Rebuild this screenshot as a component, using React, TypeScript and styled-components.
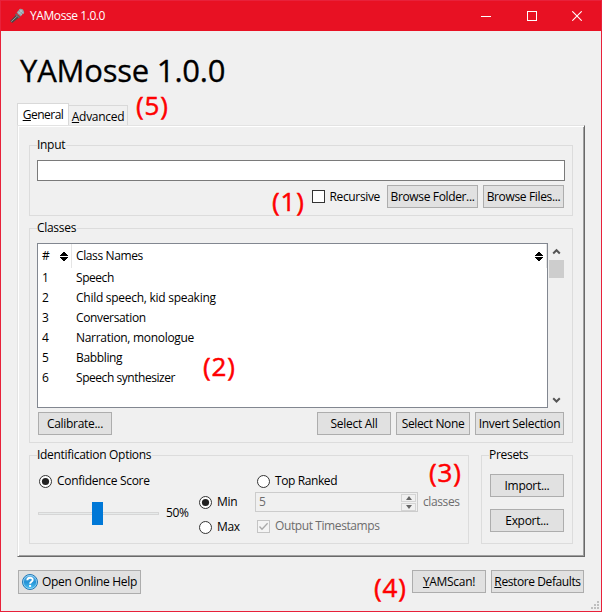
import React from "react";
import styled, { createGlobalStyle, css } from "styled-components";

const Global = createGlobalStyle`
  *, *::before, *::after { box-sizing: border-box; }
  html, body { margin: 0; padding: 0; background: #f0f0f0; }
  body { overflow: hidden; }
`;

const Window = styled.div`
  position: relative;
  width: 602px;
  height: 612px;
  display: flex;
  flex-direction: column;
  background: #f0f0f0;
  border: 1px solid #e8213a;
  color: #000;
  font-family: "Open Sans", "Noto Sans", sans-serif;
  font-size: 12px;
  line-height: 16px;
  white-space: nowrap;
  cursor: default;
`;

const Text = styled.span<{ $ls?: number }>`
  letter-spacing: ${(p) => p.$ls ?? -0.3}px;
  white-space: pre;
`;

const TitleBar = styled.header`
  flex: none;
  height: 30px;
  display: flex;
  align-items: center;
  background: #e81123;
  color: #fff;
  padding: 0 1px 0 8px;
`;

const AppName = styled.div`
  flex: 1;
  padding-left: 5px;
`;

const Caption = styled.div`
  width: 45.5px;
  height: 30px;
  display: flex;
  align-items: center;
  justify-content: center;
  svg { display: block; }
`;

const Heading = styled.h1`
  flex: none;
  margin: 0;
  height: 72px;
  padding: 18px 0 0 19px;
  font: 400 31px/42px "Open Sans", sans-serif;
  letter-spacing: -0.2px;
  -webkit-text-stroke: 0.3px #000;
`;

const Tabs = styled.nav`
  flex: none;
  display: flex;
  align-items: flex-end;
  height: 22px;
  padding-left: 16px;
`;

const Tab = styled.div<{ $active?: boolean }>`
  border: 1px solid #d9d9d9;
  border-bottom: 0;
  text-align: center;
  ${(p) =>
    p.$active
      ? css`width: 52px; height: 22px; background: #fff; padding-top: 3px;`
      : css`width: 59px; height: 20px; border-left: 0; padding-top: 3px;`}
`;

const Pane = styled.main`
  flex: none;
  width: 568px;
  height: 432px;
  margin-left: 16px;
  border-style: solid;
  border-width: 1px;
  border-color: #e3e3e3 #696969 #696969 #e3e3e3;
  box-shadow: inset 1px 1px 0 #fff, inset -1px -1px 0 #a0a0a0;
  padding: 11px 10px 0 11px;
  display: flex;
  flex-direction: column;
  gap: 4px;
`;

const Group = styled.fieldset<{ $w: number; $h: number }>`
  flex: none;
  min-width: 0;
  margin: 0;
  width: ${(p) => p.$w}px;
  height: ${(p) => p.$h}px;
  border: 1px solid #dcdcdc;
  padding: 6px 7px 0;
`;

const Legend = styled.legend`
  height: 17px;
  line-height: 16px;
  padding: 0 1px 0 0;
`;

const Entry = styled.div`
  width: 528px;
  height: 21px;
  border: 1px solid #7a7a7a;
  background: #fff;
`;

const Row = styled.div<{ $top?: number; $gap?: number; $end?: boolean; $inset?: boolean }>`
  display: flex;
  align-items: center;
  margin-top: ${(p) => p.$top ?? 0}px;
  padding: ${(p) => (p.$inset ? "0 1px" : "0")};
  gap: ${(p) => p.$gap ?? 5}px;
  justify-content: ${(p) => (p.$end ? "flex-end" : "flex-start")};
`;

const Button = styled.div<{ $w: number; $h?: number }>`
  flex: none;
  display: flex;
  align-items: center;
  justify-content: center;
  width: ${(p) => p.$w}px;
  height: ${(p) => p.$h ?? 23}px;
  border: 1px solid #adadad;
  background: #e1e1e1;
`;

const Spacer = styled.div`
  flex: 1;
`;

const Option = styled.div<{ $gap?: number; $disabled?: boolean }>`
  display: flex;
  align-items: center;
  height: 16px;
  gap: ${(p) => p.$gap ?? 5}px;
  color: ${(p) => (p.$disabled ? "#6d6d6d" : "#000")};
  svg { display: block; flex: none; }
`;

const RecursiveOption = styled(Option)`
  margin-right: 2px;
`;

const ListRow = styled.div`
  display: flex;
  width: 528px;
  height: 165px;
`;

const Tree = styled.div`
  width: 511px;
  height: 165px;
  border: 1px solid #828790;
  background: #fff;
`;

const TreeHead = styled.div`
  display: flex;
  height: 24px;
  align-items: center;
`;

const HeadCell = styled.div<{ $w: number }>`
  display: flex;
  align-items: center;
  justify-content: space-between;
  width: ${(p) => p.$w}px;
  height: 24px;
  padding: 0 3px 0 4px;
  border-right: 1px solid #e5e5e5;
`;

const TreeRow = styled.div`
  display: grid;
  grid-template-columns: 34px 1fr;
  height: 20px;
  padding-left: 4px;
  line-height: 20px;
`;

const ScrollBar = styled.div`
  width: 15px;
  height: 165px;
  margin-left: 1px;
  display: flex;
  flex-direction: column;
  align-items: center;
  svg { display: block; flex: none; }
`;

const Thumb = styled.div`
  width: 15px;
  height: 18px;
  background: #cdcdcd;
`;

const BottomGroups = styled.div`
  display: flex;
  gap: 12px;
`;

const OptionGrid = styled.div`
  display: grid;
  grid-template-columns: 160px 58px 1fr;
`;

const Column = styled.div<{ $top?: number; $left?: number }>`
  padding-top: ${(p) => p.$top ?? 0}px;
  padding-left: ${(p) => p.$left ?? 0}px;
`;

const SliderRow = styled.div`
  display: flex;
  align-items: center;
  height: 24px;
  margin-top: 12px;
  margin-left: -1px;
  gap: 7px;
`;

const Track = styled.div`
  display: flex;
  align-items: center;
  width: 121px;
  height: 3px;
  padding-left: 53px;
  border: 1px solid #d6d6d6;
  background: #e7eaea;
`;

const Knob = styled.div`
  flex: none;
  width: 11px;
  height: 23px;
  background: #0078d7;
`;

const SpinBox = styled.div`
  display: flex;
  justify-content: space-between;
  width: 163px;
  height: 20px;
  margin-left: -2px;
  border: 1px solid #ccc;
  padding: 1px 1px 0 3px;
  color: #6d6d6d;
  line-height: 16px;
`;

const Arrows = styled.div`
  display: flex;
  flex-direction: column;
  gap: 1px;
`;

const Arrow = styled.div`
  display: flex;
  align-items: center;
  justify-content: center;
  width: 15px;
  height: 8px;
  border: 1px solid #d4d4d4;
`;

const PresetButtons = styled.div`
  display: flex;
  flex-direction: column;
  gap: 12px;
  padding: 4px 0 0 1px;
`;

const Footer = styled.footer`
  display: flex;
  align-items: flex-start;
  padding: 13px 17px 0 17px;
  gap: 5px;
`;

const Note = styled.div<{ $x: number; $y: number }>`
  position: absolute;
  left: ${(p) => p.$x}px;
  top: ${(p) => p.$y}px;
  color: #f00;
  font-size: 26px;
  line-height: 36px;
  letter-spacing: 0.9px;
  -webkit-text-stroke: 0.5px #f00;
`;

const Grip = styled.svg`
  position: absolute;
  right: 2px;
  bottom: 2px;
`;

const Radio = ({ on }: { on?: boolean }) => (
  <svg width="13" height="13">
    <circle cx="6.5" cy="6.5" r="6" fill="#fff" stroke="#333" />
    {on && <circle cx="6.5" cy="6.5" r="3.6" fill="#222" />}
  </svg>
);

const Check = ({ disabled }: { disabled?: boolean }) => (
  <svg width="13" height="13">
    <rect x="0.5" y="0.5" width="12" height="12" fill={disabled ? "#f4f4f4" : "#fff"} stroke={disabled ? "#c4c4c4" : "#333"} />
    {disabled && <path d="M2.5 6.5L5 9.2L10.6 3.2" fill="none" stroke="#a9a9a9" strokeWidth="1.3" />}
  </svg>
);

const Sort = () => (
  <svg width="8" height="9" shapeRendering="crispEdges">
    <path d="M3 0h2v1h1v1h1v1h1v1H0V3h1V2h1V1h1z M0 5h8v1H7v1H6v1H5v1H3V8H2V7H1V6H0z" fill="#000" />
  </svg>
);

const Chevron = ({ down }: { down?: boolean }) => (
  <svg width="15" height="17">
    <path d={down ? "M4.2 7.2L7.5 10.5L10.8 7.2" : "M4.2 10.5L7.5 7.2L10.8 10.5"} fill="none" stroke="#555" strokeWidth="2" />
  </svg>
);

const Microphone = () => (
  <svg width="16" height="16">
    <path d="M1 13L7.5 6.5l3 2.6L3.2 15z" fill="#4b4747" />
    <path d="M2.2 13.6L8.6 7.7" stroke="#9c9696" strokeWidth="1" />
    <path d="M7 5.2l4 4-1.4 1-3.6-3.5z" fill="#626d70" />
    <path d="M7.6 4.6L11 .8Q14.8.6 15.2 4.6L11.4 8.4z" fill="#8da0a5" />
    <path d="M9 3.7l4 3.4M10.6 1.8l4.2 3.6M9.2 6.3L13.4 1.8" stroke="#bdcdd0" strokeWidth=".8" />
  </svg>
);

const HelpIcon = () => (
  <svg width="16" height="16">
    <defs>
      <linearGradient id="helpFill" x1="0" y1="0" x2="0" y2="1">
        <stop offset="0" stopColor="#68b9ea" />
        <stop offset=".5" stopColor="#2391d5" />
        <stop offset="1" stopColor="#52c5f5" />
      </linearGradient>
    </defs>
    <circle cx="8" cy="8" r="7.5" fill="url(#helpFill)" stroke="#2578b5" />
    <circle cx="8" cy="8" r="6.6" fill="none" stroke="#a6daf5" strokeWidth=".7" />
    <path d="M5.3 6.2C5.4 3 10.7 3 10.7 5.9C10.7 7.8 8.1 7.8 8.1 9.8" fill="none" stroke="#fff" strokeWidth="1.9" />
    <rect x="7.1" y="10.9" width="2" height="2" fill="#fff" />
  </svg>
);

const classNames: [string, number][] = [
  ["Speech", -0.45],
  ["Child speech, kid speaking", -0.27],
  ["Conversation", -0.35],
  ["Narration, monologue", -0.3],
  ["Babbling", -0.35],
  ["Speech synthesizer", -0.45],
];

const notes: [string, number, number][] = [
  ["(1)", 271, 182],
  ["(2)", 202, 347],
  ["(3)", 428, 453],
  ["(4)", 373, 568],
  ["(5)", 135, 86],
];

export default function App() {
  return (
    <Window>
      <Global />
      <TitleBar>
        <Microphone />
        <AppName><Text $ls={-0.42}>YAMosse 1.0.0</Text></AppName>
        <Caption><svg width="10" height="10"><path d="M0 5.5h10" stroke="#fff" /></svg></Caption>
        <Caption><svg width="10" height="10" shapeRendering="crispEdges"><rect x=".5" y=".5" width="9" height="9" fill="none" stroke="#fff" /></svg></Caption>
        <Caption><svg width="10" height="10"><path d="M.3.3l9.4 9.4M9.7.3L.3 9.7" stroke="#fff" strokeWidth="1.1" /></svg></Caption>
      </TitleBar>
      <Heading>YAMosse 1.0.0</Heading>
      <Tabs>
        <Tab $active><Text $ls={-0.5}><u>G</u>eneral</Text></Tab>
        <Tab><Text><u>A</u>dvanced</Text></Tab>
      </Tabs>
      <Pane>
        <Group $w={544} $h={79}>
          <Legend><Text>Input</Text></Legend>
          <Entry />
          <Row $top={4} $end $inset>
            <RecursiveOption><Check /><Text $ls={-0.35}>Recursive</Text></RecursiveOption>
            <Button $w={91}><Text $ls={-0.35}>Browse Folder...</Text></Button>
            <Button $w={81}><Text $ls={-0.35}>Browse Files...</Text></Button>
          </Row>
        </Group>
        <Group $w={544} $h={223}>
          <Legend><Text>Classes</Text></Legend>
          <ListRow>
            <Tree>
              <TreeHead>
                <HeadCell $w={34}><Text>#</Text><Sort /></HeadCell>
                <HeadCell $w={475}><Text $ls={-0.38}>Class Names</Text><Sort /></HeadCell>
              </TreeHead>
              {classNames.map(([name, spacing], i) => (
                <TreeRow key={name}><Text>{i + 1}</Text><Text $ls={spacing}>{name}</Text></TreeRow>
              ))}
            </Tree>
            <ScrollBar>
              <Chevron />
              <Thumb />
              <Spacer />
              <Chevron down />
            </ScrollBar>
          </ListRow>
          <Row $top={4} $inset>
            <Button $w={74}><Text>Calibrate...</Text></Button>
            <Spacer />
            <Button $w={74}><Text>Select All</Text></Button>
            <Button $w={74}><Text $ls={-0.36}>Select None</Text></Button>
            <Button $w={89}><Text>Invert Selection</Text></Button>
          </Row>
        </Group>
        <BottomGroups>
          <Group $w={440} $h={97}>
            <Legend><Text>Identification Options</Text></Legend>
            <OptionGrid>
              <Column $top={3} $left={2}>
                <Option><Radio on /><Text>Confidence Score</Text></Option>
                <SliderRow><Track><Knob /></Track><Text>50%</Text></SliderRow>
              </Column>
              <Column $top={24} $left={2}>
                <Option><Radio on /><Text>Min</Text></Option>
                <Row $top={9}><Option><Radio /><Text>Max</Text></Option></Row>
              </Column>
              <Column $top={3} $left={2}>
                <Option><Radio /><Text $ls={-0.4}>Top Ranked</Text></Option>
                <Row $top={3}>
                  <SpinBox>
                    <Text>5</Text>
                    <Arrows>
                      <Arrow><svg width="6" height="4"><path d="M0 4L3 0L6 4z" fill="#666" /></svg></Arrow>
                      <Arrow><svg width="6" height="4"><path d="M0 0L3 4L6 0z" fill="#666" /></svg></Arrow>
                    </Arrows>
                  </SpinBox>
                  <Option $disabled><Text $ls={-0.4}>classes</Text></Option>
                </Row>
                <Row $top={6}><Option $disabled><Check disabled /><Text $ls={-0.4}>Output Timestamps</Text></Option></Row>
              </Column>
            </OptionGrid>
          </Group>
          <Group $w={92} $h={97}>
            <Legend><Text>Presets</Text></Legend>
            <PresetButtons>
              <Button $w={74}><Text>Import...</Text></Button>
              <Button $w={74}><Text>Export...</Text></Button>
            </PresetButtons>
          </Group>
        </BottomGroups>
      </Pane>
      <Footer>
        <Button $w={123} $h={24}><Option $gap={4}><HelpIcon /><Text>Open Online Help</Text></Option></Button>
        <Spacer />
        <Button $w={74}><Text><u>Y</u>AMScan!</Text></Button>
        <Button $w={93}><Text $ls={-0.4}><u>R</u>estore Defaults</Text></Button>
      </Footer>
      {notes.map(([label, x, y]) => (
        <Note key={label} $x={x} $y={y}>{label}</Note>
      ))}
      <Grip width="8" height="8" fill="#bfbfbf">
        <path d="M6 0h2v2H6zM3 3h2v2H3zM6 3h2v2H6zM0 6h2v2H0zM3 6h2v2H3zM6 6h2v2H6z" />
      </Grip>
    </Window>
  );
}
